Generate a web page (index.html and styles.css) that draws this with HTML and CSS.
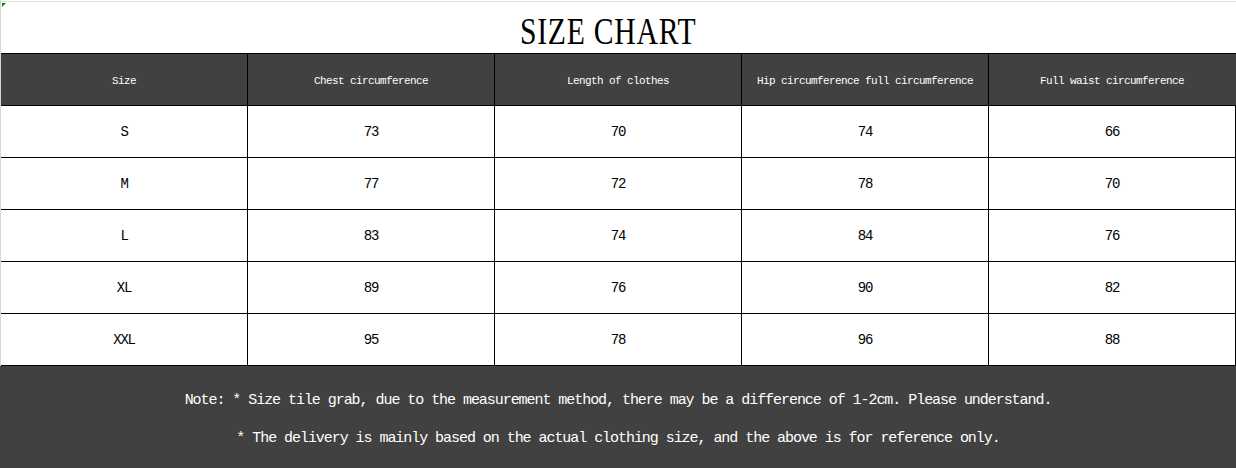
FILE: index.html
```html
<!DOCTYPE html>
<html lang="en">
<head>
<meta charset="utf-8">
<title>Size Chart</title>
<link rel="stylesheet" href="styles.css">
</head>
<body>
<div class="sheet">
  <div class="title"><span class="mark"></span><h1>SIZE CHART</h1></div>
  <div class="grid head">
    <div class="cell">Size</div>
    <div class="cell">Chest circumference</div>
    <div class="cell">Length of clothes</div>
    <div class="cell">Hip circumference full circumference</div>
    <div class="cell last">Full waist circumference</div>
  </div>
  <div class="grid body">
    <div class="cell">S</div><div class="cell">73</div><div class="cell">70</div><div class="cell">74</div><div class="cell">66</div>
    <div class="cell">M</div><div class="cell">77</div><div class="cell">72</div><div class="cell">78</div><div class="cell">70</div>
    <div class="cell">L</div><div class="cell">83</div><div class="cell">74</div><div class="cell">84</div><div class="cell">76</div>
    <div class="cell">XL</div><div class="cell">89</div><div class="cell">76</div><div class="cell">90</div><div class="cell">82</div>
    <div class="cell">XXL</div><div class="cell">95</div><div class="cell">78</div><div class="cell">96</div><div class="cell">88</div>
  </div>
  <div class="note">
    <p>Note: * Size tile grab, due to the measurement method, there may be a difference of 1-2cm. Please understand.</p>
    <p>* The delivery is mainly based on the actual clothing size, and the above is for reference only.</p>
  </div>
</div>
</body>
</html>
```

FILE: styles.css
```css
* { box-sizing: border-box; }
html, body { margin: 0; padding: 0; background: #fff; }
body { width: 1236px; height: 468px; overflow: hidden; }

.sheet {
  width: 1236px;
  height: 468px;
  padding-top: 1px;
  border-left: 1px solid #d6d6d6;
  display: flex;
  flex-direction: column;
}

.title {
  position: relative;
  height: 52px;
  border-top: 1px solid #e2e2e2;
  display: flex;
  align-items: center;
  justify-content: center;
  padding: 6px 20px 0 0;
}
.mark {
  position: absolute;
  left: 1px;
  top: 1px;
  width: 0;
  height: 0;
  border-top: 4px solid #0a8a0a;
  border-right: 4px solid transparent;
}
.title h1 {
  margin: 0;
  font-family: "Liberation Serif", "Times New Roman", serif;
  font-weight: normal;
  font-size: 38px;
  line-height: 40px;
  letter-spacing: 1px;
  transform: scaleX(0.78);
  color: #000;
}

.grid {
  display: grid;
  grid-template-columns: repeat(5, 247px);
}
.cell {
  height: 52px;
  border-right: 1px solid #000;
  border-bottom: 1px solid #000;
  display: flex;
  align-items: center;
  justify-content: center;
}

.head {
  border-top: 1px solid #000;
  background: #414141;
}
.head .cell {
  color: #fff;
  font-family: "Liberation Mono", "DejaVu Sans Mono", monospace;
  font-size: 11px;
  letter-spacing: -0.6px;
  padding-top: 2px;
}
.head .cell.last { border-right-color: #414141; }

.body .cell {
  color: #000;
  font-family: "Liberation Mono", "DejaVu Sans Mono", monospace;
  font-size: 14px;
  letter-spacing: -1.2px;
  padding-top: 1px;
}

.note {
  flex: 1;
  margin-left: -1px;
  background: #414141;
  color: #fff;
  font-family: "Liberation Mono", "DejaVu Sans Mono", monospace;
  font-size: 15px;
  letter-spacing: -1.05px;
  line-height: 20px;
  padding-top: 25px;
  display: flex;
  flex-direction: column;
  align-items: center;
  gap: 18px;
}
.note p { margin: 0; }
```
